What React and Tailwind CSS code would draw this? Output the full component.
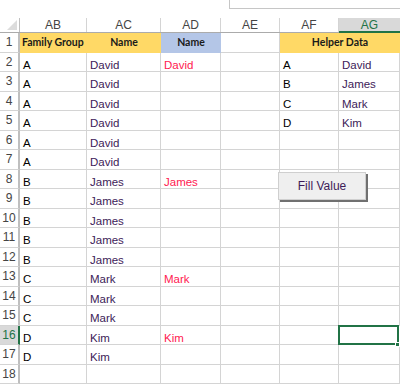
import React from "react";

const COLS = [
  { key: "AB", w: 67 },
  { key: "AC", w: 74 },
  { key: "AD", w: 60 },
  { key: "AE", w: 59 },
  { key: "AF", w: 59 },
  { key: "AG", w: 61 },
];

const HELPER = { A: "David", B: "James", C: "Mark", D: "Kim" };

const DATA = [
  ["A", "David", "David"],
  ["A", "David", ""],
  ["A", "David", ""],
  ["A", "David", ""],
  ["A", "David", ""],
  ["A", "David", ""],
  ["B", "James", "James"],
  ["B", "James", ""],
  ["B", "James", ""],
  ["B", "James", ""],
  ["B", "James", ""],
  ["C", "Mark", "Mark"],
  ["C", "Mark", ""],
  ["C", "Mark", ""],
  ["D", "Kim", "Kim"],
  ["D", "Kim", ""],
  ["", "", ""],
];

const HELPER_ROWS = Object.entries(HELPER);

function Cell({ children, className = "" }) {
  return (
    <div className={`h-full flex items-end pl-[3px] leading-none border-r border-b border-[#d4d4d4] overflow-visible whitespace-nowrap ${className}`}>
      {children}
    </div>
  );
}

export default function App() {
  const grid = "grid grid-cols-[20px_67px_74px_60px_59px_59px_61px]";
  return (
    <div className="relative w-[400px] h-[387px] overflow-hidden bg-white font-['Liberation_Sans',Arial,sans-serif] text-[11.5px]">
      {/* formula bar edge */}
      <div className="h-[18px] relative">
        <div className="absolute left-[229px] -top-px right-[-2px] h-[10px] border border-[#c6c6c6] bg-white" />
      </div>

      {/* column headings */}
      <div className={`${grid} h-[15px] border-b border-[#ababab]`}>
        <div className="relative border-r border-[#bfbfbf]">
          <svg className="absolute right-[2px] bottom-[2px]" width="10" height="10" viewBox="0 0 10 10">
            <polygon points="10,0 10,10 0,10" fill="#dcdcdc" />
          </svg>
        </div>
        {COLS.map((c) =>
          c.key === "AG" ? (
            <div key={c.key} className="flex items-center justify-center bg-[#d9d9d9] border-b-2 border-[#217346] text-[#217346] text-[12px] leading-none -mb-px">
              {c.key}
            </div>
          ) : (
            <div key={c.key} className="flex items-center justify-center border-r border-[#d4d4d4] text-[#444] text-[12px] leading-none">
              {c.key}
            </div>
          )
        )}
      </div>

      {/* row 1 */}
      <div className={`${grid} h-[19.5px]`}>
        <div className="flex items-center justify-center text-[#444] text-[12px] border-r-2 border-[#bfbfbf] border-b border-b-[#d4d4d4]">1</div>
        <div className="bg-[#ffd966] flex items-center pl-[2px] font-['Lato',sans-serif] font-bold text-[10.5px] text-[#1a1a1a]">Family Group</div>
        <div className="bg-[#ffd966] flex items-center justify-center font-['Lato',sans-serif] font-bold text-[10.5px] text-[#1a1a1a]">Name</div>
        <div className="bg-[#b4c6e7] flex items-center justify-center font-['Lato',sans-serif] font-bold text-[10.5px] text-[#1a1a1a]">Name</div>
        <div className="border-r border-b border-[#d4d4d4]" />
        <div className="col-span-2 bg-[#ffd966] flex items-center justify-center font-['Lato',sans-serif] font-bold text-[10.5px] text-[#1a1a1a]">Helper Data</div>
      </div>

      {/* data rows */}
      {DATA.map((r, i) => {
        const n = i + 2;
        const sel = n === 16;
        const helper = HELPER_ROWS[i];
        return (
          <div key={n} className={`${grid} h-[19.5px]`}>
            <div
              className={`flex items-center justify-center text-[12px] border-b border-[#d4d4d4] ${
                sel ? "bg-[#d9d9d9] text-[#217346] border-r-2 border-r-[#217346]" : "text-[#444] border-r-2 border-r-[#bfbfbf]"
              }`}
            >
              {n}
            </div>
            <Cell className="text-black">{r[0]}</Cell>
            <Cell className="text-[#3d1b58]">{r[1]}</Cell>
            <Cell className="text-[#ff2050]">{r[2]}</Cell>
            <Cell />
            <Cell className="text-black">{helper ? helper[0] : ""}</Cell>
            {sel ? (
              <div className="relative h-full border-b border-[#d4d4d4]">
                <div className="absolute -left-px -top-[1px] right-[1px] -bottom-px border-2 border-[#217346]" />
                <div className="absolute right-0 -bottom-[3px] w-[5px] h-[5px] bg-[#217346] border border-white" />
              </div>
            ) : (
              <Cell className="text-[#3d1b58]">{helper ? helper[1] : ""}</Cell>
            )}
          </div>
        );
      })}

      {/* form button */}
      <button className="absolute left-[278px] top-[172px] w-[88px] h-[28px] bg-[#efefef] border border-[#cfcfcf] shadow-[2px_2px_0_#707070] text-[12px] text-[#3d1b58] font-['Liberation_Sans',Arial,sans-serif] flex items-center justify-center pb-[1px]">
        Fill Value
      </button>
    </div>
  );
}
